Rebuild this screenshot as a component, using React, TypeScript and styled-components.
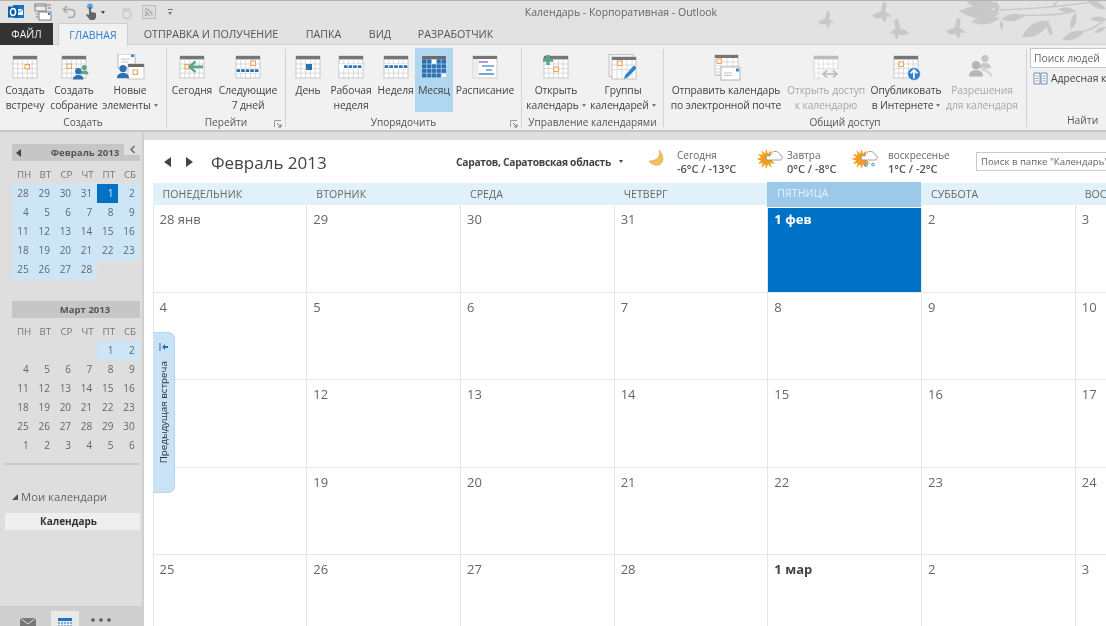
import React, { FC } from "react";
import styled, { createGlobalStyle } from "styled-components";

const GlobalStyle = createGlobalStyle`
  html, body {
    margin: 0;
    padding: 0;
    width: 1106px;
    height: 626px;
    overflow: hidden;
    background: #dedede;
    font-family: "Open Sans", "Noto Sans", sans-serif;
  }
`;

const Cal: FC<{ children?: React.ReactNode; muted?: boolean; w?: number; h?: number }> = ({ children, muted, w = 30, h = 28 }) => (
  <svg width={w} height={h} viewBox="0 0 30 28">
    <rect x="3" y="2" width="24" height="22" fill="#fff" stroke={muted ? "#d0d0d0" : "#bdbdbd"} strokeWidth="0.8" />
    <rect x="3" y="2" width="24" height="3.4" fill={muted ? "#bcbcbc" : "#767676"} />
    <path d="M3 10h24M3 14.6h24M3 19.2h24M7.8 5v19M12.6 5v19M17.4 5v19M22.2 5v19" stroke={muted ? "#dcdcdc" : "#cfcfcf"} strokeWidth="0.8" />
    {children}
  </svg>
);

const Orange: FC<{ x: number; y: number }> = ({ x, y }) => (
  <rect x={x} y={y} width="4.4" height="4.4" fill="#fff" stroke="#ee9b4a" strokeWidth="1" />
);

const Person: FC<{ x: number; y: number; c: string; s?: number }> = ({ x, y, c, s = 1 }) => (
  <g transform={`translate(${x} ${y}) scale(${s})`} fill={c}>
    <circle cx="5" cy="3" r="3" />
    <path d="M0 11c0-3 2-4.4 5-4.4s5 1.4 5 4.4z" />
  </g>
);

const Icons: Record<string, React.ReactNode> = {
  meeting: <Cal><Orange x={15} y={10.5} /></Cal>,
  assembly: (
    <Cal>
      <Orange x={8} y={10} />
      <Person x={21} y={11} c="#5ca58c" s={0.85} />
      <Person x={14} y={14} c="#2f6eb0" s={1.05} />
    </Cal>
  ),
  items: (
    <svg width="30" height="28" viewBox="0 0 30 28">
      <rect x="3" y="0" width="17" height="14" fill="#fff" stroke="#a8a8a8" strokeWidth="0.8" />
      <path d="M6 5h9M6 8h7" stroke="#b5b5b5" strokeWidth="0.8" />
      <rect x="16" y="0.5" width="3" height="2.5" fill="#3a86c8" />
      <rect x="13" y="10" width="16" height="15" fill="#fff" stroke="#bdbdbd" strokeWidth="0.8" />
      <rect x="13" y="10" width="16" height="3" fill="#6e6e6e" />
      <Orange x={18} y={16} />
      <Person x={2} y={11} c="#2f6eb0" s={1.2} />
    </svg>
  ),
  today: (
    <Cal>
      <Orange x={8} y={10.5} />
      <path d="M13 12.8h13" stroke="#5ca58c" strokeWidth="2.6" />
      <path d="M18.5 7.5l-6 5.3 6 5.3" fill="none" stroke="#5ca58c" strokeWidth="2.4" />
    </Cal>
  ),
  next: (
    <Cal>
      <Orange x={18} y={7} />
      <rect x="3" y="14.6" width="24" height="4" fill="#fff" />
      <path d="M3.5 16.6h23" stroke="#2f6eb0" strokeWidth="2.6" strokeDasharray="3.6 1" />
    </Cal>
  ),
  day: <Cal><rect x="13" y="10" width="6" height="6" fill="#2f6eb0" /></Cal>,
  week: (
    <Cal>
      <rect x="3" y="10" width="24" height="5" fill="#fff" />
      <path d="M8 12.6h18" stroke="#3474b4" strokeWidth="2.6" strokeDasharray="3.6 1" />
    </Cal>
  ),
  fullweek: (
    <Cal>
      <rect x="3" y="10" width="24" height="5" fill="#fff" />
      <path d="M3.5 12.6h23" stroke="#3474b4" strokeWidth="2.6" strokeDasharray="3.8 1" />
    </Cal>
  ),
  month: (
    <svg width="30" height="28" viewBox="0 0 30 28">
      <rect x="3" y="2" width="24" height="3.4" fill="#6a6a6a" />
      <path d="M3 5.4h24v18H3z" fill="#2f6eb0" />
      <path d="M3 10h24M3 14.6h24M3 19.2h24M7.8 5v19M12.6 5v19M17.4 5v19M22.2 5v19" stroke="#b5d8f0" strokeWidth="0.7" />
      <rect x="12.8" y="5.4" width="4.4" height="4.4" fill="#fff" />
      <rect x="22.4" y="19.4" width="4.6" height="4" fill="#fff" />
    </svg>
  ),
  schedule: (
    <svg width="30" height="28" viewBox="0 0 30 28">
      <rect x="3" y="2" width="24" height="22" fill="#fff" stroke="#c4c4c4" strokeWidth="0.8" />
      <rect x="3" y="2" width="24" height="3" fill="#767676" />
      <rect x="3" y="5" width="6" height="19" fill="#ededed" />
      <path d="M9 8h9" stroke="#a36fc2" strokeWidth="1.5" />
      <path d="M12 12h12" stroke="#5b9bd5" strokeWidth="1.5" />
      <path d="M16 16h6" stroke="#5b9bd5" strokeWidth="1.5" />
      <path d="M9 20h15" stroke="#4a86c0" strokeWidth="1.5" />
    </svg>
  ),
  openCal: (
    <Cal>
      <Orange x={13} y={13} />
      <path d="M7 1v10M2 6h10" stroke="#5ca58c" strokeWidth="3.4" />
    </Cal>
  ),
  groups: (
    <svg width="30" height="28" viewBox="0 0 30 28">
      <rect x="1" y="0.5" width="24" height="22" fill="#f4f4f4" stroke="#b8b8b8" strokeWidth="0.8" />
      <rect x="4" y="3" width="24" height="22" fill="#fff" stroke="#b8b8b8" strokeWidth="0.8" />
      <rect x="4" y="3" width="24" height="3" fill="#767676" />
      <path d="M4 11h24M4 15.6h24M9 6v19M14 6v19M19 6v19M24 6v19" stroke="#d2d2d2" strokeWidth="0.8" />
      <Orange x={9.5} y={7} />
      <path d="M15 26l2-5 9-10 3 3-9 9.4z" fill="#2f7fc9" stroke="#fff" strokeWidth="0.6" />
    </svg>
  ),
  mail: (
    <svg width="30" height="28" viewBox="0 0 30 28">
      <rect x="4" y="1" width="23" height="20" fill="#fff" stroke="#bdbdbd" strokeWidth="0.8" />
      <rect x="4" y="1" width="23" height="3" fill="#767676" />
      <path d="M4 8h23M4 12h23M10 4v17M16 4v17M22 4v17" stroke="#d2d2d2" strokeWidth="0.8" />
      <Orange x={6} y={5} />
      <rect x="10" y="13" width="19" height="13" fill="#fff" stroke="#a6a6a6" strokeWidth="0.8" />
      <rect x="25" y="14.5" width="3" height="3" fill="#3a86c8" />
      <path d="M13 19h8M13 21.5h8" stroke="#b0b0b0" strokeWidth="0.8" />
      <path d="M5 15h5M5 18h5M5 21h5" stroke="#b7c7d6" strokeWidth="0.8" />
    </svg>
  ),
  shareCal: (
    <Cal muted>
      <rect x="10" y="15" width="20" height="10" fill="#f1f1f1" />
      <path d="M13 20h12" stroke="#b4b4b4" strokeWidth="1.4" />
      <path d="M16 16.5L12 20l4 3.5M22 16.5l4 3.5-4 3.5" fill="none" stroke="#b4b4b4" strokeWidth="1.4" />
    </Cal>
  ),
  publish: (
    <Cal>
      <Orange x={8} y={8} />
      <circle cx="23" cy="20" r="6.4" fill="#2f7fc9" stroke="#fff" strokeWidth="0.6" />
      <path d="M23 24.5v-8M19.6 19.4l3.4-3.4 3.4 3.4" fill="none" stroke="#fff" strokeWidth="1.7" />
    </Cal>
  ),
  perms: (
    <svg width="30" height="28" viewBox="0 0 30 28">
      <Person x={12} y={1} c="#c6c6c6" s={1.2} />
      <Person x={2} y={7} c="#b6b6b6" s={1.4} />
      <path d="M17 14l8 8" stroke="#d6d6d6" strokeWidth="2.4" />
      <circle cx="17" cy="15" r="2.6" fill="#d6d6d6" />
    </svg>
  ),
};

type Btn = { icon: string; lines: [string, string?]; w: number; caret?: boolean; off?: boolean; on?: boolean };
type Group = { label: string; width: number; pad: number; launcher?: boolean; btns: Btn[] };

const groups: Group[] = [
  {
    label: "Создать", width: 166, pad: 1,
    btns: [
      { icon: "meeting", lines: ["Создать", "встречу"], w: 48 },
      { icon: "assembly", lines: ["Создать", "собрание"], w: 50 },
      { icon: "items", lines: ["Новые", "элементы"], w: 62, caret: true },
    ],
  },
  {
    label: "Перейти", width: 118, pad: 0, launcher: true,
    btns: [
      { icon: "today", lines: ["Сегодня"], w: 50 },
      { icon: "next", lines: ["Следующие", "7 дней"], w: 62 },
    ],
  },
  {
    label: "Упорядочить", width: 235, pad: 4, launcher: true,
    btns: [
      { icon: "day", lines: ["День"], w: 36 },
      { icon: "week", lines: ["Рабочая", "неделя"], w: 50 },
      { icon: "fullweek", lines: ["Неделя"], w: 39 },
      { icon: "month", lines: ["Месяц"], w: 38, on: true },
      { icon: "schedule", lines: ["Расписание"], w: 64 },
    ],
  },
  {
    label: "Управление календарями", width: 141, pad: 4,
    btns: [
      { icon: "openCal", lines: ["Открыть", "календарь"], w: 60, caret: true },
      { icon: "groups", lines: ["Группы", "календарей"], w: 74, caret: true },
    ],
  },
  {
    label: "Общий доступ", width: 362, pad: 4,
    btns: [
      { icon: "mail", lines: ["Отправить календарь", "по электронной почте"], w: 116 },
      { icon: "shareCal", lines: ["Открыть доступ", "к календарю"], w: 84, off: true },
      { icon: "publish", lines: ["Опубликовать", "в Интернете"], w: 76, caret: true },
      { icon: "perms", lines: ["Разрешения", "для календаря"], w: 76, off: true },
    ],
  },
];

const weekDays = ["ПОНЕДЕЛЬНИК", "ВТОРНИК", "СРЕДА", "ЧЕТВЕРГ", "ПЯТНИЦА", "СУББОТА", "ВОСКРЕСЕНЬЕ"];
const weeks = [
  ["28 янв", "29", "30", "31", "1 фев", "2", "3"],
  ["4", "5", "6", "7", "8", "9", "10"],
  ["11", "12", "13", "14", "15", "16", "17"],
  ["18", "19", "20", "21", "22", "23", "24"],
  ["25", "26", "27", "28", "1 мар", "2", "3"],
];

const miniHead = ["ПН", "ВТ", "СР", "ЧТ", "ПТ", "СБ"];
const febDays = ["28", "29", "30", "31", "1", "2", "4", "5", "6", "7", "8", "9", "11", "12", "13", "14", "15", "16", "18", "19", "20", "21", "22", "23", "25", "26", "27", "28"];
const marDays = ["", "", "", "", "1", "2", "4", "5", "6", "7", "8", "9", "11", "12", "13", "14", "15", "16", "18", "19", "20", "21", "22", "23", "25", "26", "27", "28", "29", "30", "1", "2", "3", "4", "5", "6"];

const Bird: FC<{ x: number; y: number; s?: number; flip?: boolean }> = ({ x, y, s = 1, flip }) => (
  <path
    transform={`translate(${x} ${y}) scale(${flip ? -s : s} ${s})`}
    d="M-9 2C-6 0-4-1-2-1L0-9C2-10 3-8 3-6L2-1C4 0 6 2 8 3L3 3C3 5 2 7 1 8L-1 4C-4 5-7 4-9 2z"
  />
);

// leaf running from one point to another
const Leaf: FC<{ a: [number, number]; b: [number, number]; fat?: number }> = ({ a, b, fat = 0.3 }) => {
  const mx = (a[0] + b[0]) / 2;
  const my = (a[1] + b[1]) / 2;
  const nx = -(b[1] - a[1]) * fat;
  const ny = (b[0] - a[0]) * fat;
  return <path d={`M${a[0]} ${a[1]}Q${mx + nx} ${my + ny} ${b[0]} ${b[1]}Q${mx - nx} ${my - ny} ${a[0]} ${a[1]}z`} />;
};

const Decoration = () => (
  <DecorSvg width="296" height="44" viewBox="810 0 296 44" fill="#c8c8c8">
    <Bird x={827} y={19} />
    <Bird x={883} y={12} s={1.2} />
    <Bird x={898} y={29} s={1.2} flip />
    <Bird x={957} y={28} s={1.2} />
    <path d="M1000 9C1030 8 1060 6 1100 0M1022 14C1050 15 1065 13 1076 10M1085 30C1095 28 1100 22 1106 18" fill="none" stroke="#c8c8c8" strokeWidth="1.4" />
    <Leaf a={[1000, 13]} b={[959, 10]} />
    <Leaf a={[1000, 17]} b={[971, 21]} />
    <Leaf a={[1000, 5]} b={[966, 1]} />
    <Leaf a={[997, 14]} b={[996, 0]} fat={0.4} />
    <Leaf a={[1001, 18]} b={[1025, 15]} />
    <Leaf a={[1001, 19]} b={[1002, 29]} />
    <Leaf a={[1050, 20]} b={[1022, 36]} fat={0.35} />
    <Leaf a={[1047, 21]} b={[1052, 35]} />
    <Leaf a={[1076, 10]} b={[1058, 8]} />
    <Leaf a={[1076, 11]} b={[1071, 29]} />
    <Leaf a={[1085, 30]} b={[1062, 39]} fat={0.3} />
    <Leaf a={[1106, 18]} b={[1090, 18]} />
    <Leaf a={[1106, 26]} b={[1094, 32]} />
    <Leaf a={[1058, 0]} b={[1052, 6]} />
    <Leaf a={[1088, 0]} b={[1106, 8]} />
    <Leaf a={[968, 0]} b={[985, 5]} />
  </DecorSvg>
);

const Launcher = () => (
  <LauncherBox>
    <svg width="8" height="8" viewBox="0 0 8 8">
      <path d="M0.5 7V0.5H7" fill="none" stroke="#9a9a9a" />
      <path d="M3 3l4 4M7 4v3H4" fill="none" stroke="#777" />
    </svg>
  </LauncherBox>
);

const MiniCalendar: FC<{ title: string; days: string[]; isSelected: (i: number) => boolean; today?: number; collapse?: boolean }> = ({ title, days, isSelected, today, collapse }) => (
  <MiniWrap>
    <MiniTitle>
      {collapse && (
        <MiniPrev>
          <svg width="6" height="8" viewBox="0 0 6 8"><path d="M5 0v8L0 4z" fill="#444" /></svg>
        </MiniPrev>
      )}
      {title}
    </MiniTitle>
    {collapse && (
      <CollapseBtn>
        <svg width="7" height="9" viewBox="0 0 7 9"><path d="M5.5 1L2 4.5 5.5 8" fill="none" stroke="#666" strokeWidth="1.4" /></svg>
      </CollapseBtn>
    )}
    <MiniGrid>
      {miniHead.map((d) => <MiniHead key={d}>{d}</MiniHead>)}
      {days.map((d, i) => (
        <MiniDay key={i} $sel={isSelected(i)} $today={today === i}>{d}</MiniDay>
      ))}
    </MiniGrid>
  </MiniWrap>
);

const sunRays = Array.from({ length: 24 }, (_, i) => {
  const r = i % 2 === 0 ? 10 : 5.5;
  const a = (i * Math.PI) / 12;
  return `${(9.5 + r * Math.cos(a)).toFixed(1)},${(12 + r * Math.sin(a)).toFixed(1)}`;
}).join(" ");

const Sun: FC<{ snow?: boolean }> = ({ snow }) => (
  <svg width="26" height="24" viewBox="0 0 26 24">
    <polygon points={sunRays} fill="#f0a01e" />
    <path d="M10 13c-2-3 0-5 3-4 1-6 9-6 10-1 3 0 3 5 0 5z" fill="#fff" stroke="#8a8a8a" strokeWidth="0.8" />
    {snow && (
      <g fill="none" stroke="#4a90d0" strokeWidth="1">
        <circle cx="14" cy="18" r="1.4" />
        <circle cx="21" cy="17.5" r="1.4" />
      </g>
    )}
  </svg>
);

const App: FC = () => (
  <Window>
    <GlobalStyle />
    <TitleBar>
      <Decoration />
      <QuickBar>
        <svg width="18" height="18" viewBox="0 0 18 18">
          <rect x="6" y="2" width="11" height="13" fill="#1f73c4" />
          <path d="M9 6h7v6H9z" fill="#fff" /><path d="M9 6l3.5 3L16 6" fill="none" stroke="#1f73c4" />
          <rect x="1" y="3.5" width="10" height="11" fill="#0a5ea8" />
          <ellipse cx="6" cy="9" rx="2.6" ry="3.4" fill="none" stroke="#fff" strokeWidth="1.5" />
        </svg>
        <QuickIcon $left={9} width="18" height="18" viewBox="0 0 18 18">
          <rect x="1" y="1" width="11" height="7" fill="#eee" stroke="#7d7d7d" />
          <rect x="5" y="9" width="12" height="8" fill="#fff" stroke="#7d7d7d" />
          <path d="M1 3h11M13 2h4M14 5h3M2 11h2M2 14h2" stroke="#7d7d7d" />
          <rect x="14" y="10" width="2" height="2" fill="#2f7fc9" />
        </QuickIcon>
        <QuickIcon $left={10} width="16" height="14" viewBox="0 0 16 14">
          <path d="M5 1L1.5 4.5 5 8M2 4.5h7c5 0 5 8 0 8H6" fill="none" stroke="#a9a9a9" strokeWidth="1.6" />
        </QuickIcon>
        <QuickIcon $left={5} width="16" height="18" viewBox="0 0 16 18">
          <circle cx="7" cy="3.5" r="3" fill="#5aa5e0" />
          <path d="M6 4h2v5l5 1v5l-2 2H7L3 12l1-1 2 1z" fill="#666" />
        </QuickIcon>
        <Caret $dark $left={2} />
        <QuickIcon $left={14} width="15" height="15" viewBox="0 0 15 15">
          <path d="M3 3h8v3H3z" fill="#d2d2d2" />
          <circle cx="8" cy="9.5" r="4" fill="none" stroke="#c8c8c8" strokeWidth="1.6" />
        </QuickIcon>
        <QuickIcon $left={8} width="14" height="14" viewBox="0 0 14 14">
          <rect x="0.5" y="0.5" width="13" height="13" fill="#ddd" stroke="#bbb" />
          <path d="M3 4c4 0 7 3 7 7M3 7c2 0 4 2 4 4" fill="none" stroke="#a8a8a8" strokeWidth="1.3" />
          <circle cx="4" cy="10" r="1.2" fill="#a8a8a8" />
        </QuickIcon>
        <CustomizeMark />
      </QuickBar>
      <WindowTitle>Календарь - Корпоративная - Outlook</WindowTitle>
      <Tabs>
        <FileTab>ФАЙЛ</FileTab>
        <ActiveTab>ГЛАВНАЯ</ActiveTab>
        <Tab $w={166}>ОТПРАВКА И ПОЛУЧЕНИЕ</Tab>
        <Tab $w={59}>ПАПКА</Tab>
        <Tab $w={54}>ВИД</Tab>
        <Tab $w={97}>РАЗРАБОТЧИК</Tab>
      </Tabs>
    </TitleBar>

    <Ribbon>
      {groups.map((g) => (
        <React.Fragment key={g.label}>
          <RibbonGroup $w={g.width}>
            <GroupButtons $pad={g.pad}>
              {g.btns.map((b) => (
                <RibbonButton key={b.lines[0] + b.icon} $w={b.w} $on={b.on} $off={b.off}>
                  <IconSlot>{Icons[b.icon]}</IconSlot>
                  <span>{b.lines[0]}</span>
                  {b.lines[1] && (
                    <span>
                      {b.lines[1]}
                      {b.caret && <Caret $left={3} />}
                    </span>
                  )}
                </RibbonButton>
              ))}
            </GroupButtons>
            <GroupLabel>{g.label}</GroupLabel>
            {g.launcher && <Launcher />}
          </RibbonGroup>
          <Separator />
        </React.Fragment>
      ))}
      <FindGroup>
        <PeopleSearch>Поиск людей</PeopleSearch>
        <AddressBook>
          <svg width="15" height="13" viewBox="0 0 15 13">
            <path d="M1 1h6v11H1zM8 1h6v11H8z" fill="#fff" stroke="#6c8fb0" />
            <path d="M2.5 4h3M2.5 6.5h3M2.5 9h3M9.5 4h3M9.5 6.5h3M9.5 9h3" stroke="#9a9a9a" />
          </svg>
          Адресная книга
        </AddressBook>
        <FindLabel>Найти</FindLabel>
      </FindGroup>
    </Ribbon>

    <Body>
      <Sidebar>
        <MiniCalendar title="Февраль 2013" days={febDays} isSelected={() => true} today={4} collapse />
        <MiniCalendar title="Март 2013" days={marDays} isSelected={(i) => i === 4 || i === 5} />
        <SideRule />
        <FolderHead>
          <svg width="6" height="6" viewBox="0 0 6 6"><path d="M6 0v6H0z" fill="#555" /></svg>
          Мои календари
        </FolderHead>
        <FolderItem>Календарь</FolderItem>
        <NavBar>
          <NavIcon>
            <svg width="16" height="12" viewBox="0 0 16 12"><rect width="16" height="12" fill="#777" /><path d="M0 0l8 6 8-6" fill="none" stroke="#ddd" /></svg>
          </NavIcon>
          <NavIcon $on>
            <svg width="14" height="13" viewBox="0 0 14 13"><rect width="14" height="3" fill="#1f73c4" /><path d="M0 5h14M0 8h14M0 11h14" stroke="#1f73c4" strokeDasharray="2 1" /></svg>
          </NavIcon>
          <NavIcon>
            <svg width="20" height="4" viewBox="0 0 20 4"><circle cx="2" cy="2" r="1.8" fill="#555" /><circle cx="10" cy="2" r="1.8" fill="#555" /><circle cx="18" cy="2" r="1.8" fill="#555" /></svg>
          </NavIcon>
        </NavBar>
      </Sidebar>

      <Main>
        <Toolbar>
          <NavGroup>
            <svg width="7" height="10" viewBox="0 0 7 10"><path d="M7 0v10L0 5z" fill="#444" /></svg>
            <svg width="7" height="10" viewBox="0 0 7 10"><path d="M0 0v10l7-5z" fill="#444" /></svg>
          </NavGroup>
          <MonthTitle>Февраль 2013</MonthTitle>
          <Location>
            Саратов, Саратовская область
            <Caret $dark $left={8} />
          </Location>
          <Weather $w={109}>
            <WeatherIcon $w={29}>
              <svg width="16" height="17" viewBox="0 0 16 17"><path d="M11 0c2 6-2 11-10 11 3 5 13 7 14-2 0-4-2-7-4-9z" fill="#f0c060" stroke="#d09a30" strokeWidth="0.5" /></svg>
            </WeatherIcon>
            <WeatherText>Сегодня<b>-6°C / -13°C</b></WeatherText>
          </Weather>
          <Weather $w={95}>
            <WeatherIcon $w={30}><Sun /></WeatherIcon>
            <WeatherText>Завтра<b>0°C / -8°C</b></WeatherText>
          </Weather>
          <Weather $w={124}>
            <WeatherIcon $w={36}><Sun snow /></WeatherIcon>
            <WeatherText>воскресенье<b>1°C / -2°C</b></WeatherText>
          </Weather>
          <FolderSearch>Поиск в папке "Календарь"</FolderSearch>
        </Toolbar>

        <CalendarClip>
          <DayHeaders>
            {weekDays.map((d, i) => <DayHeader key={d} $today={i === 4}>{d}</DayHeader>)}
          </DayHeaders>
          {weeks.map((w, r) => (
            <WeekRow key={r}>
              {w.map((d, c) => (
                <DayCell key={c} $today={r === 0 && c === 4} $bold={r === 4 && c === 4}>{d}</DayCell>
              ))}
            </WeekRow>
          ))}
        </CalendarClip>

        <PrevTab>
          <svg width="10" height="8" viewBox="0 0 10 8"><path d="M1 0v8" stroke="#2f6eb0" /><path d="M3 4l3-3v2h3v2H6v2z" fill="#2f6eb0" /></svg>
          <PrevText>Предыдущая встреча</PrevText>
        </PrevTab>
      </Main>
    </Body>
  </Window>
);

const Window = styled.div`
  width: 1106px;
  height: 626px;
  overflow: hidden;
  display: flex;
  flex-direction: column;
  background: #dedede;
  color: #444;
  filter: blur(0.35px);
`;

const TitleBar = styled.div`
  position: relative;
  height: 44px;
  flex: none;
  background: #e2e2e2;
  border-top: 1px solid #b9b2a6;
  box-sizing: border-box;
`;

const DecorSvg = styled.svg`
  position: absolute;
  right: 0;
  top: 0;
`;

const QuickBar = styled.div`
  height: 22px;
  padding-left: 7px;
  display: flex;
  align-items: center;
`;

const QuickIcon = styled.svg<{ $left: number }>`
  margin-left: ${(p) => p.$left}px;
`;

const CustomizeMark = styled.i`
  display: block;
  width: 5px;
  height: 5px;
  margin-left: 12px;
  border-top: 1px solid #777;
  position: relative;
  &::after {
    content: "";
    position: absolute;
    left: 0;
    top: 2px;
    border: 2.5px solid transparent;
    border-top: 3px solid #777;
  }
`;

const WindowTitle = styled.div`
  position: absolute;
  top: 3px;
  left: 0;
  width: 1242px;
  text-align: center;
  font-size: 10.5px;
  line-height: 16px;
  color: #666;
`;

const Tabs = styled.div`
  display: flex;
  align-items: stretch;
  height: 22px;
`;

const FileTab = styled.div`
  width: 53px;
  background: #333;
  color: #f1f1f1;
  font-size: 10.5px;
  line-height: 22px;
  text-align: center;
`;

const ActiveTab = styled.div`
  width: 70px;
  height: 23px;
  margin: 0 0 0 5px;
  box-sizing: border-box;
  background: #f1f1f1;
  border: 1px solid #d0d0d0;
  border-bottom: 0;
  color: #2b7cd3;
  font-size: 10.5px;
  line-height: 22px;
  text-align: center;
  position: relative;
  z-index: 1;
`;

const Tab = styled.div<{ $w: number }>`
  width: ${(p) => p.$w}px;
  flex: none;
  text-align: center;
  color: #555;
  font-size: 10.7px;
  line-height: 22px;
  white-space: nowrap;
`;

const Ribbon = styled.div`
  height: 88px;
  flex: none;
  box-sizing: border-box;
  display: flex;
  background: #f1f1f1;
  border-top: 1px solid #d0d0d0;
  border-bottom: 2px solid #c6c6c6;
  overflow: hidden;
`;

const RibbonGroup = styled.div<{ $w: number }>`
  position: relative;
  width: ${(p) => p.$w}px;
  flex: none;
  display: flex;
  flex-direction: column;
`;

const GroupButtons = styled.div<{ $pad: number }>`
  display: flex;
  height: 64px;
  margin-top: 3px;
  padding-left: ${(p) => p.$pad}px;
`;

const RibbonButton = styled.div<{ $w: number; $on?: boolean; $off?: boolean }>`
  width: ${(p) => p.$w}px;
  flex: none;
  display: flex;
  flex-direction: column;
  align-items: center;
  font-size: 10.3px;
  line-height: 14.5px;
  white-space: nowrap;
  letter-spacing: -0.1px;
  color: ${(p) => (p.$off ? "#a8a8a8" : "#444")};
  background: ${(p) => (p.$on ? "#b1d6f0" : "transparent")};
`;

const IconSlot = styled.div`
  height: 35px;
  display: flex;
  align-items: center;
  justify-content: center;
  padding-top: 4px;
  box-sizing: border-box;
`;

const GroupLabel = styled.div`
  margin-top: 3px;
  text-align: center;
  font-size: 10.1px;
  line-height: 15px;
  color: #555;
  white-space: nowrap;
`;

const LauncherBox = styled.div`
  position: absolute;
  right: 3px;
  bottom: 2px;
  line-height: 0;
`;

const Separator = styled.div`
  width: 1px;
  flex: none;
  margin: 4px 0 3px;
  background: #d2d2d2;
`;

const FindGroup = styled.div`
  flex: 1;
  min-width: 0;
  padding: 3px 0 0 3px;
  position: relative;
  white-space: nowrap;
  font-size: 10.3px;
  color: #444;
`;

const PeopleSearch = styled.div`
  height: 20px;
  margin-right: -10px;
  box-sizing: border-box;
  border: 1px solid #c6c6c6;
  background: #fff;
  padding-left: 3px;
  line-height: 18px;
  color: #666;
`;

const AddressBook = styled.div`
  display: flex;
  gap: 3px;
  align-items: center;
  margin: 3px 0 0 3px;
  line-height: 14px;
  svg {
    flex: none;
  }
`;

const FindLabel = styled.div`
  position: absolute;
  left: 40px;
  top: 68px;
  color: #555;
  line-height: 15px;
`;

const Body = styled.div`
  flex: 1;
  min-height: 0;
  display: flex;
`;

const Sidebar = styled.aside`
  width: 144px;
  flex: none;
  box-sizing: border-box;
  display: flex;
  flex-direction: column;
  padding-top: 12px;
  border-right: 2px solid #cfcfcf;
`;

const MiniWrap = styled.div`
  position: relative;
  margin-bottom: 22px;
  &:nth-of-type(2) {
    margin-bottom: 8px;
  }
`;

const MiniTitle = styled.div`
  position: relative;
  height: 17px;
  margin: 0 2px 4px 12px;
  padding-left: 18px;
  background: #c6c6c6;
  text-align: center;
  font-size: 9.6px;
  font-weight: 700;
  line-height: 17px;
  color: #555;
`;

const MiniPrev = styled.span`
  position: absolute;
  left: 4px;
  top: 1px;
`;

const CollapseBtn = styled.div`
  position: absolute;
  right: 2px;
  top: 0;
  width: 16px;
  height: 11px;
  background: #dedede;
  display: flex;
  align-items: center;
  justify-content: center;
`;

const MiniGrid = styled.div`
  display: grid;
  grid-template-columns: repeat(6, 21.2px);
  grid-auto-rows: 19px;
  margin-left: 12.5px;
`;

const MiniHead = styled.div`
  font-size: 9.8px;
  line-height: 19px;
  text-align: center;
  color: #777;
  padding-left: 2px;
`;

const MiniDay = styled.div<{ $sel: boolean; $today: boolean }>`
  font-size: 10px;
  line-height: 19px;
  text-align: right;
  padding-right: 5px;
  color: ${(p) => (p.$today ? "#d8ecfa" : "#666")};
  background: ${(p) => (p.$today ? "#0072c6" : p.$sel ? "#cde6f7" : "transparent")};
`;

const SideRule = styled.div`
  height: 2px;
  margin-left: 5px;
  margin-right: 2px;
  background: #c9c9c9;
`;

const FolderHead = styled.div`
  display: flex;
  align-items: center;
  gap: 3px;
  margin: 24px 0 0 12px;
  font-size: 11.3px;
  line-height: 16px;
  color: #666;
`;

const FolderItem = styled.div`
  margin: 8px 2px 0 5px;
  height: 17px;
  background: #efefef;
  font-size: 10px;
  font-weight: 700;
  line-height: 17px;
  padding-left: 35px;
  color: #333;
`;

const NavBar = styled.div`
  margin-top: auto;
  height: 20px;
  flex: none;
  background: #cfcfcf;
  display: flex;
  overflow: hidden;
  padding-left: 20px;
`;

const NavIcon = styled.div<{ $on?: boolean }>`
  flex: none;
  display: flex;
  justify-content: center;
  align-items: flex-start;
  width: ${(p) => (p.$on ? "28px" : "auto")};
  margin: 5px ${(p) => (p.$on ? "12px" : "15px")} 0 0;
  padding-top: 7px;
  background: ${(p) => (p.$on ? "#e9e9e9" : "transparent")};
`;

const Main = styled.main`
  position: relative;
  flex: 1;
  min-width: 0;
  margin-top: 8px;
  background: #fff;
  overflow: hidden;
`;

const Toolbar = styled.div`
  height: 43px;
  display: flex;
  align-items: center;
  padding-left: 19px;
  white-space: nowrap;
`;

const NavGroup = styled.div`
  width: 48px;
  flex: none;
  display: flex;
  gap: 15px;
  padding-left: 1px;
  box-sizing: border-box;
`;

const MonthTitle = styled.div`
  width: 245px;
  flex: none;
  font-size: 17px;
  line-height: 24px;
  margin-top: 2px;
  color: #444;
`;

const Location = styled.div`
  width: 192px;
  flex: none;
  font-size: 10.3px;
  font-weight: 700;
  letter-spacing: -0.3px;
  color: #444;
  display: flex;
  align-items: center;
`;

const Weather = styled.div<{ $w: number }>`
  width: ${(p) => p.$w}px;
  flex: none;
  display: flex;
  align-items: center;
`;

const WeatherIcon = styled.div<{ $w: number }>`
  width: ${(p) => p.$w}px;
  flex: none;
  line-height: 0;
  margin-top: -6px;
`;

const WeatherText = styled.div`
  display: flex;
  flex-direction: column;
  font-size: 10px;
  line-height: 14px;
  color: #666;
  b {
    font-weight: 600;
    color: #555;
    font-size: 11px;
  }
`;

const FolderSearch = styled.div`
  flex: none;
  width: 150px;
  height: 19px;
  box-sizing: border-box;
  border: 1px solid #c9c9c9;
  padding-left: 4px;
  font-size: 9.6px;
  line-height: 17px;
  color: #666;
`;

const CalendarClip = styled.div`
  margin-left: 8.6px;
  width: 1076px;
`;

const DayHeaders = styled.div`
  display: grid;
  grid-template-columns: repeat(7, 153.7px);
  height: 22px;
  background: #e1f1fa;
`;

const DayHeader = styled.div<{ $today: boolean }>`
  height: ${(p) => (p.$today ? "25px" : "22px")};
  margin-top: ${(p) => (p.$today ? "-1px" : "0")};
  position: relative;
  padding-left: 10px;
  font-size: 10.5px;
  line-height: 22px;
  letter-spacing: 0.1px;
  overflow: hidden;
  white-space: nowrap;
  color: ${(p) => (p.$today ? "#e8f3fb" : "#666")};
  background: ${(p) => (p.$today ? "#9cc8e9" : "transparent")};
`;

const WeekRow = styled.div`
  display: grid;
  grid-template-columns: repeat(7, 153.7px);
  height: 87.5px;
  box-sizing: border-box;
  border-bottom: 1px solid #e6e6e6;
`;

const DayCell = styled.div<{ $today: boolean; $bold: boolean }>`
  box-sizing: border-box;
  border-left: 1px solid #e6e6e6;
  padding: 5px 0 0 6px;
  font-size: 13px;
  line-height: 18px;
  white-space: nowrap;
  overflow: hidden;
  color: ${(p) => (p.$today ? "#fff" : p.$bold ? "#444" : "#666")};
  font-weight: ${(p) => (p.$today || p.$bold ? 700 : 400)};
  background: ${(p) => (p.$today ? "#0072c6" : "#fff")};
  ${(p) => p.$today && "margin-top: 3px; padding-top: 2px;"}
`;

const PrevTab = styled.div`
  position: absolute;
  left: 9px;
  top: 192px;
  width: 22px;
  height: 161px;
  box-sizing: border-box;
  background: #c9e2f6;
  border: 1px solid #b5d6f0;
  border-left: 0;
  border-radius: 0 7px 7px 0;
  display: flex;
  flex-direction: column;
  align-items: center;
  padding-top: 10px;
  gap: 10px;
`;

const PrevText = styled.div`
  writing-mode: vertical-rl;
  transform: rotate(180deg);
  font-size: 9.8px;
  line-height: 14px;
  white-space: nowrap;
  color: #333;
`;

const Caret = styled.i<{ $dark?: boolean; $left?: number }>`
  display: inline-block;
  vertical-align: middle;
  width: 0;
  height: 0;
  margin-left: ${(p) => p.$left ?? 0}px;
  border: 2.5px solid transparent;
  border-top: 3px solid ${(p) => (p.$dark ? "#444" : "#777")};
  border-bottom: 0;
`;

export default App;
